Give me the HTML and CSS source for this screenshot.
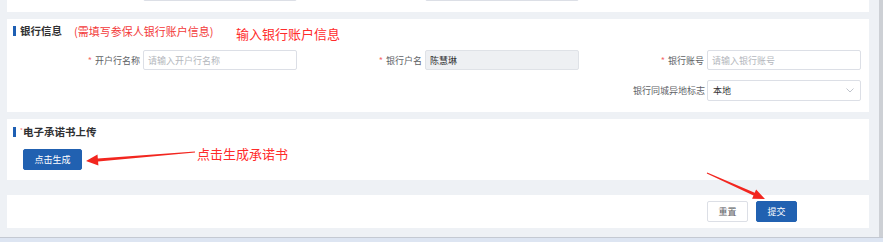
FILE: index.html
```html
<!DOCTYPE html>
<html lang="zh-CN">
<head>
<meta charset="utf-8">
<title>银行信息</title>
<link rel="stylesheet" href="styles.css">
</head>
<body>
<div class="frame">
  <div class="main">
    <div class="panel panel-top">
      <div class="form-grid grid-top">
        <div class="field"><div class="input"></div></div>
        <div class="field"><div class="input"></div></div>
      </div>
    </div>

    <div class="panel panel-bank">
      <div class="title-row">
        <span class="bar"></span>
        <span class="title">银行信息</span>
        <span class="note">(需填写参保人银行账户信息)</span>
      </div>
      <div class="form-grid">
        <div class="field">
          <span class="label"><span class="req">*</span>开户行名称</span>
          <div class="input">请输入开户行名称</div>
        </div>
        <div class="field">
          <span class="label"><span class="req">*</span>银行户名</span>
          <div class="input disabled">陈慧琳</div>
        </div>
        <div class="field">
          <span class="label"><span class="req">*</span>银行账号</span>
          <div class="input">请输入银行账号</div>
        </div>
        <div class="field col3">
          <span class="label">银行同城异地标志</span>
          <div class="input select">
            <span>本地</span>
            <svg class="chev" width="8" height="5" viewBox="0 0 8 5"><path d="M0.5 0.5 L4 4 L7.5 0.5" fill="none" stroke="#c0c4cc" stroke-width="1"/></svg>
          </div>
        </div>
      </div>
    </div>

    <div class="panel panel-promise">
      <div class="title-row">
        <span class="bar"></span>
        <span class="mini-req">*</span>
        <span class="title">电子承诺书上传</span>
      </div>
      <button class="btn btn-primary btn-gen">点击生成</button>
    </div>

    <div class="panel panel-actions">
      <button class="btn btn-plain">重置</button>
      <button class="btn btn-primary">提交</button>
    </div>
  </div>
  <div class="scroll"></div>
</div>

<div class="mark mark-1">输入银行账户信息</div>
<div class="mark mark-2">点击生成承诺书</div>
<svg class="overlay" width="883" height="242" viewBox="0 0 883 242">
  <polygon fill="#f2261f" points="86,161 97.5,154.5 97.84,158.5 194.96,151.5 195.04,152.5 98.08,161.5 98.4,165.5"/>
  <polygon fill="#f2261f" points="765,199 756.1,189.5 754.7,192.73 707.2,172.54 706.8,173.46 753.5,195.47 752.1,198.7"/>
</svg>
</body>
</html>
```

FILE: styles.css
```css
* {
  box-sizing: border-box;
  margin: 0;
  padding: 0;
}

body {
  width: 883px;
  height: 242px;
  overflow: hidden;
  position: relative;
  background: #dde5f2;
  font-family: "Noto Sans CJK SC", "Noto Sans", sans-serif;
}

.frame {
  display: flex;
  height: 238px;
  border-bottom: 1px solid #c4c9d2;
  background: #eef1f5;
}

.main {
  flex: 1;
  padding: 0 10px 0 7px;
  display: flex;
  flex-direction: column;
}

.scroll {
  width: 4px;
  background: #cdd0d5;
}

.panel {
  background: #fff;
}

.panel-top {
  height: 12px;
  overflow: hidden;
  margin-bottom: 7px;
}

.panel-bank {
  height: 93px;
  padding: 7px 7px 0 6px;
  margin-bottom: 7px;
}

.panel-promise {
  height: 61px;
  padding: 8px 0 0 6px;
  margin-bottom: 15px;
}

.panel-actions {
  height: 33px;
  padding: 6px 72px 0 0;
  display: flex;
  justify-content: flex-end;
  gap: 8px;
}

.title-row {
  display: flex;
  align-items: center;
  height: 10px;
}

.bar {
  width: 3px;
  height: 10px;
  background: #1e5fb3;
  margin-right: 4px;
}

.title {
  font-size: 10.5px;
  font-weight: bold;
  color: #303133;
  line-height: 10px;
}

.note {
  color: #f33a3a;
  font-size: 11px;
  line-height: 10px;
  margin-left: 12px;
}

.mini-req {
  color: #f56c6c;
  font-size: 6px;
  line-height: 6px;
  align-self: flex-start;
  margin-top: 1px;
  width: 3px;
}

.form-grid {
  display: grid;
  grid-template-columns: repeat(3, 282px);
  row-gap: 10px;
  margin: 14px 0 0 3px;
}

.grid-top {
  margin: -19px 0 0 9px;
}

.field {
  display: flex;
  justify-content: flex-end;
  align-items: center;
  gap: 3px;
  padding-right: 1px;
}

.col3 {
  grid-column: 3;
  gap: 2px;
}

.label {
  font-size: 9px;
  color: #606266;
  white-space: nowrap;
}

.req {
  color: #f56c6c;
  margin-right: 3px;
}

.input {
  width: 154px;
  height: 20px;
  border: 1px solid #dcdfe6;
  border-radius: 2px;
  font-size: 9px;
  padding-left: 4px;
  display: flex;
  align-items: center;
  color: #b4b7bd;
  background: #fff;
}

.input.disabled {
  background: #eef0f3;
  border-color: #dfe2e7;
  color: #333;
}

.input.select {
  height: 21px;
  color: #333;
  padding-left: 5px;
  padding-right: 6px;
  justify-content: space-between;
}

.btn {
  font-family: inherit;
  font-size: 9px;
  border-radius: 2px;
  height: 21px;
  width: 41px;
  cursor: pointer;
}

.btn-primary {
  background: #2161b1;
  border: 1px solid #2161b1;
  color: #fff;
}

.btn-plain {
  background: #fff;
  border: 1px solid #dcdfe6;
  color: #606266;
}

.btn-gen {
  display: block;
  width: 59px;
  margin: 12px 0 0 10px;
}

.mark {
  position: absolute;
  color: #ff2b2b;
  font-size: 13px;
  line-height: 13px;
  white-space: nowrap;
}

.mark-1 {
  left: 236px;
  top: 27px;
}

.mark-2 {
  left: 197px;
  top: 147px;
}

.overlay {
  position: absolute;
  left: 0;
  top: 0;
  pointer-events: none;
}
```
